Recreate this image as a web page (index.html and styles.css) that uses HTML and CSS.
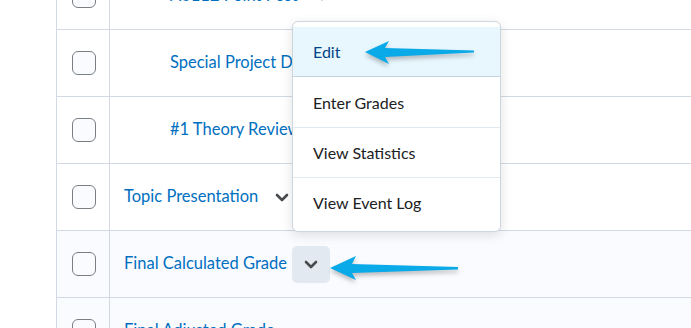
FILE: index.html
```html
<!DOCTYPE html>
<html lang="en">
<head>
    <meta charset="UTF-8">
    <title>Grades</title>
    <link rel="stylesheet" href="styles.css">
</head>
<body>
    <div class="page">
        <div class="grid">
            <div class="row">
                <div class="cell-check"><span class="checkbox"></span></div>
                <div class="cell-name indent">
                    <a class="item-link">A0112 Point Post</a>
                    <span class="chev-btn"><svg viewBox="0 0 14 9" width="14" height="9"><path d="M2 2l5 5 5-5" /></svg></span>
                </div>
            </div>
            <div class="row">
                <div class="cell-check"><span class="checkbox"></span></div>
                <div class="cell-name indent"><a class="item-link">Special Project Draft</a></div>
            </div>
            <div class="row">
                <div class="cell-check"><span class="checkbox"></span></div>
                <div class="cell-name indent"><a class="item-link">#1 Theory Review</a></div>
            </div>
            <div class="row">
                <div class="cell-check"><span class="checkbox"></span></div>
                <div class="cell-name">
                    <a class="item-link">Topic Presentation</a>
                    <span class="chev-btn"><svg viewBox="0 0 14 9" width="14" height="9"><path d="M2 2l5 5 5-5" /></svg></span>
                </div>
            </div>
            <div class="row row-tint">
                <div class="cell-check"><span class="checkbox"></span></div>
                <div class="cell-name">
                    <a class="item-link">Final Calculated Grade</a>
                    <span class="chev-btn active"><svg viewBox="0 0 14 9" width="14" height="9"><path d="M2 2l5 5 5-5" /></svg></span>
                </div>
            </div>
            <div class="row row-tint">
                <div class="cell-check"><span class="checkbox"></span></div>
                <div class="cell-name"><a class="item-link">Final Adjusted Grade</a></div>
            </div>
        </div>

        <ul class="menu">
            <li class="menu-item selected">Edit</li>
            <li class="menu-item">Enter Grades</li>
            <li class="menu-item">View Statistics</li>
            <li class="menu-item">View Event Log</li>
        </ul>

        <!-- annotation arrows -->
        <svg class="arrow arrow-edit" width="120" height="34" viewBox="0 0 120 34">
            <path d="M2 13 L26 2 L22 9 L111 11.5 L111 13.5 L22 18 L26 25 Z" />
        </svg>
        <svg class="arrow arrow-grade" width="140" height="34" viewBox="0 0 140 34">
            <path d="M2 13 L28 1 L24 9 L130 12 L130 14.5 L24 18 L28 25 Z" />
        </svg>
    </div>
</body>
</html>
```

FILE: styles.css
```css
* {
    margin: 0;
    padding: 0;
    box-sizing: border-box;
}

body {
    font-family: Lato, 'Noto Sans', sans-serif;
    background: #ffffff;
    overflow: hidden;
}

.page {
    position: relative;
    width: 691px;
    height: 328px;
    overflow: hidden;
}

.grid {
    margin-top: -37px;
    margin-left: 56px;
    border-left: 1px solid #d3d9e3;
}

.row {
    display: flex;
    height: 67px;
    border-bottom: 1px solid #d3d9e3;
    background: #ffffff;
}

.row-tint {
    background: #f9fbff;
}

.cell-check {
    width: 53px;
    flex-shrink: 0;
    display: flex;
    align-items: center;
    justify-content: center;
    border-right: 1px solid #d3d9e3;
    padding-left: 1px;
}

.checkbox {
    width: 24px;
    height: 24px;
    border: 1px solid #7a7f84;
    border-radius: 6px;
    background: #f9fbff;
}

.cell-name {
    flex: 1;
    display: flex;
    align-items: center;
    padding-left: 14px;
    padding-bottom: 2px;
    gap: 5px;
}

.cell-name.indent {
    padding-left: 60px;
}

.item-link {
    color: #006fbf;
    font-size: 16.5px;
    cursor: pointer;
}

.chev-btn {
    width: 38px;
    height: 37px;
    border-radius: 5px;
    display: flex;
    align-items: center;
    justify-content: center;
    margin-top: 2px;
}

.chev-btn.active {
    background: #e3e9f1;
}

.chev-btn svg path {
    fill: none;
    stroke: #494c4e;
    stroke-width: 2.6;
    stroke-linecap: round;
    stroke-linejoin: round;
}

.menu {
    position: absolute;
    left: 292px;
    top: 21px;
    width: 209px;
    list-style: none;
    background: #ffffff;
    border: 1px solid #cdd5de;
    border-radius: 6px;
    padding: 5px 0 4px;
    box-shadow: 0 3px 12px rgba(0, 0, 0, 0.12);
}

.menu-item {
    height: 50px;
    display: flex;
    align-items: center;
    padding-left: 20px;
    font-size: 16px;
    color: #202122;
    border-top: 1px solid #e3e9f1;
}

.menu-item:first-child {
    border-top: none;
}

.menu-item.selected {
    background: #e8f6fd;
    color: #004489;
    border-bottom: 1px solid #c5d1dc;
}

.menu-item.selected + .menu-item {
    border-top: none;
}

.arrow {
    position: absolute;
}

.arrow path {
    fill: #0aa9e8;
    filter: drop-shadow(0 3px 2px rgba(0, 0, 0, 0.25));
}

.arrow-edit {
    left: 363px;
    top: 39px;
}

.arrow-grade {
    left: 328px;
    top: 255px;
}
```
